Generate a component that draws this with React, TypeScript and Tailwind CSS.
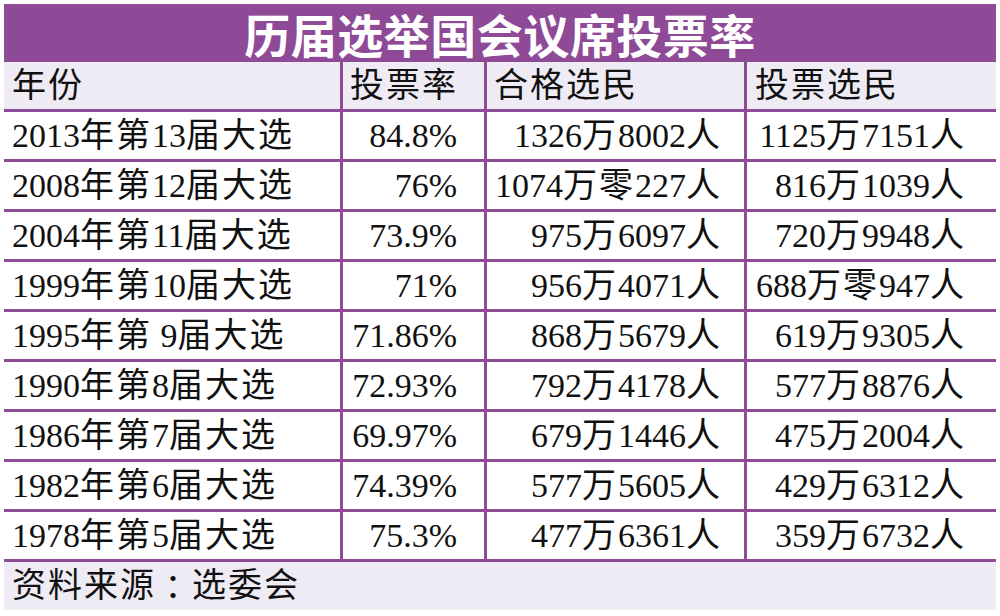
const rows = [
  ["2013年第13届大选", "84.8%", "1326万8002人", "1125万7151人"],
  ["2008年第12届大选", "76%", "1074万零227人", "816万1039人"],
  ["2004年第11届大选", "73.9%", "975万6097人", "720万9948人"],
  ["1999年第10届大选", "71%", "956万4071人", "688万零947人"],
  ["1995年第 9届大选", "71.86%", "868万5679人", "619万9305人"],
  ["1990年第8届大选", "72.93%", "792万4178人", "577万8876人"],
  ["1986年第7届大选", "69.97%", "679万1446人", "475万2004人"],
  ["1982年第6届大选", "74.39%", "577万5605人", "429万6312人"],
  ["1978年第5届大选", "75.3%", "477万6361人", "359万6732人"],
];

const serif = "font-['Liberation_Serif','Noto_Sans_CJK_SC',serif]";

// CJK glyphs in the print are a touch wider than Noto's, so give them a little air
function Mixed({ text }: { text: string }) {
  const parts = text.split(/([\u4e00-\u9fff\uff1a]+)/).filter(Boolean);
  return (
    <span className="whitespace-pre">
      {parts.map((p, i) =>
        /[\u4e00-\u9fff\uff1a]/.test(p) ? (
          <span key={i} className="tracking-[2px]">
            {p}
          </span>
        ) : (
          <span key={i}>{p}</span>
        )
      )}
    </span>
  );
}

export default function App() {
  return (
    <div className="min-h-[616px] w-[1000px] bg-white pl-[4px] pt-[4px]">
      <div className={`w-[992px] ${serif} text-[34px] leading-none text-[#111]`}>
        {/* Title bar */}
        <div className="flex h-[58px] items-center justify-center bg-[#8e4a97]">
          <span className="font-['Noto_Sans_CJK_SC',sans-serif] text-[46px] font-bold tracking-[0.5px] text-white">
            历届选举国会议席投票率
          </span>
        </div>

        {/* Header */}
        <div className="grid h-[50px] grid-cols-[339px_144px_260px_1fr] border-b-[3px] border-[#8e4a97] bg-[#efebf4]">
          <div className="flex items-center border-r-[3px] border-[#8e4a97] pl-[8px] tracking-[2px]">年份</div>
          <div className="flex items-center border-r-[3px] border-[#8e4a97] pl-[7px] tracking-[2px]">投票率</div>
          <div className="flex items-center border-r-[3px] border-[#8e4a97] pl-[7px] tracking-[2px]">合格选民</div>
          <div className="flex items-center pl-[8px] tracking-[2px]">投票选民</div>
        </div>

        {/* Data rows */}
        {rows.map((r) => (
          <div
            key={r[0]}
            className="grid h-[50px] grid-cols-[339px_144px_260px_1fr] border-b-[3px] border-[#8e4a97] bg-white"
          >
            <div className="flex items-center border-r-[3px] border-[#8e4a97] pl-[8px]">
              <Mixed text={r[0]} />
            </div>
            <div className="flex items-center justify-end border-r-[3px] border-[#8e4a97] pr-[27px]">{r[1]}</div>
            <div className="flex items-center justify-end border-r-[3px] border-[#8e4a97] pr-[22px]">
              <Mixed text={r[2]} />
            </div>
            <div className="flex items-center justify-end pr-[30px]">
              <Mixed text={r[3]} />
            </div>
          </div>
        ))}

        {/* Footer */}
        <div className="flex h-[48px] items-center bg-[#efebf4] pl-[8px] tracking-[2px]">
          资料来源<span className="font-['Noto_Sans_CJK_TC',sans-serif]">：</span>选委会
        </div>
      </div>
    </div>
  );
}
